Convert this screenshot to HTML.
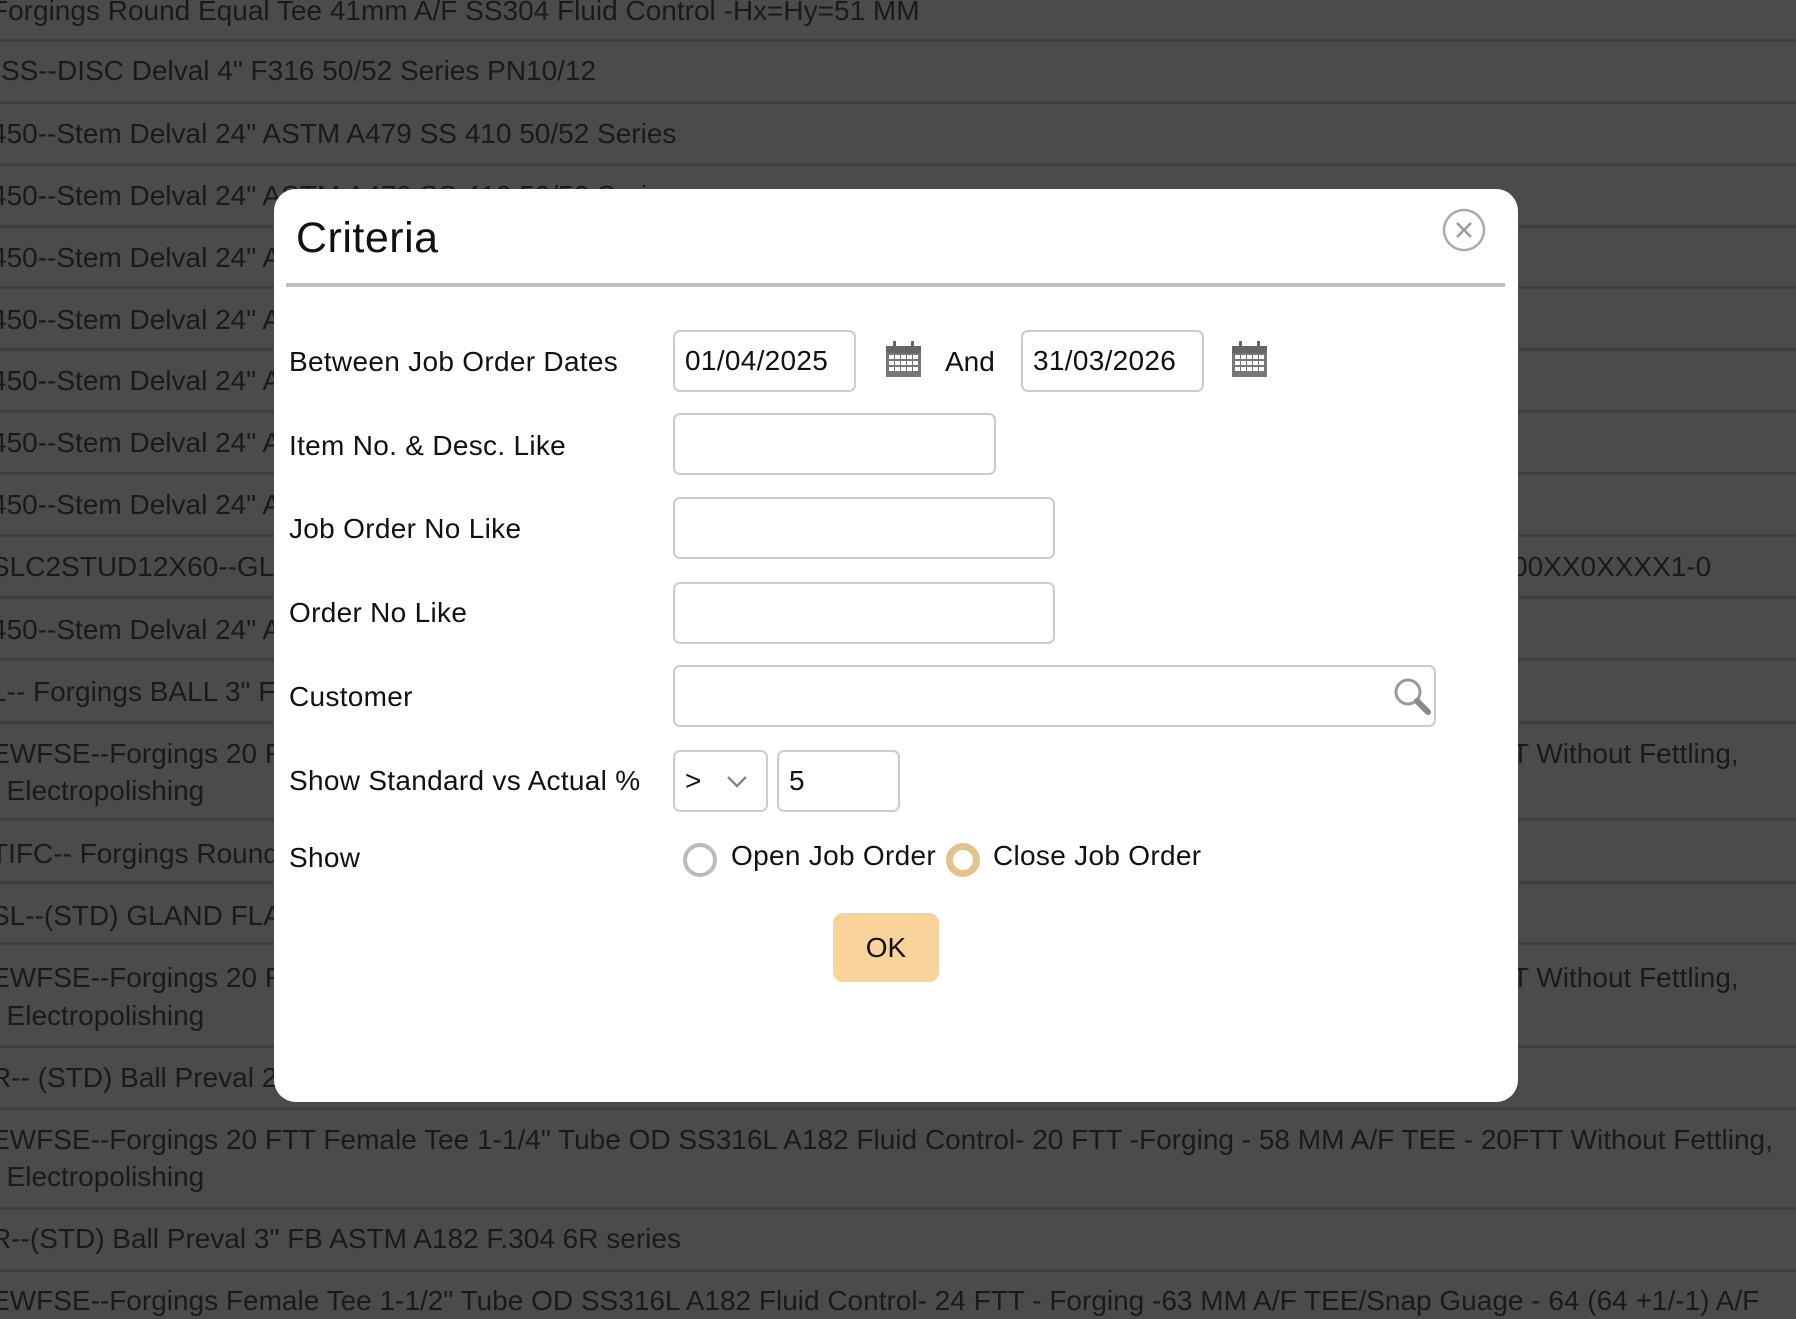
<!DOCTYPE html>
<html><head><meta charset="utf-8"><style>
*{margin:0;padding:0;box-sizing:border-box}
body{width:1796px;height:1316px;overflow:hidden;background:#4b4b4b;font-family:"Liberation Sans",sans-serif;position:relative}
.t{position:absolute;left:-9px;font-size:28px;line-height:36px;color:#1a1a1a;white-space:nowrap;letter-spacing:0}
.s{position:absolute;left:0;width:1796px;height:3px;background:#3f3f3f}
.m{position:absolute;left:274px;top:189px;width:1244px;height:913px;background:#fff;border-radius:22px}
.a{position:absolute}
.l{position:absolute;left:15px;font-size:28px;line-height:36px;color:#111;letter-spacing:0.3px;white-space:nowrap}
.in{position:absolute;border:2px solid #ccc;border-radius:7px;background:#fff;font-size:28px;color:#111;line-height:58px;padding-left:10px;letter-spacing:0.3px}
</style></head><body>
<div class="s" style="top:39px"></div><div class="s" style="top:101px"></div><div class="s" style="top:163px"></div><div class="s" style="top:225px"></div><div class="s" style="top:286px"></div><div class="s" style="top:348px"></div><div class="s" style="top:410px"></div><div class="s" style="top:472px"></div><div class="s" style="top:534px"></div><div class="s" style="top:596px"></div><div class="s" style="top:658px"></div><div class="s" style="top:721px"></div><div class="s" style="top:818px"></div><div class="s" style="top:881px"></div><div class="s" style="top:942px"></div><div class="s" style="top:1045px"></div><div class="s" style="top:1107px"></div><div class="s" style="top:1207px"></div><div class="s" style="top:1269px"></div>
<div class="t" style="top:-7px">Forgings Round Equal Tee 41mm A/F SS304 Fluid Control -Hx=Hy=51 MM</div>
<div class="t" style="top:53px;left:1px">SS--DISC Delval 4" F316 50/52 Series PN10/12</div>
<div class="t" style="top:116px">450--Stem Delval 24" ASTM A479 SS 410 50/52 Series</div>
<div class="t" style="top:178px">450--Stem Delval 24" ASTM A479 SS 410 50/52 Series</div>
<div class="t" style="top:240px">450--Stem Delval 24" ASTM A479 SS 410 50/52 Series</div>
<div class="t" style="top:302px">450--Stem Delval 24" ASTM A479 SS 410 50/52 Series</div>
<div class="t" style="top:363px">450--Stem Delval 24" ASTM A479 SS 410 50/52 Series</div>
<div class="t" style="top:425px">450--Stem Delval 24" ASTM A479 SS 410 50/52 Series</div>
<div class="t" style="top:487px">450--Stem Delval 24" ASTM A479 SS 410 50/52 Series</div>
<div class="t" style="top:549px">SLC2STUD12X60--GLAND</div>
<div class="t" style="top:549px;left:1512px">00XX0XXXX1-0</div>
<div class="t" style="top:612px">450--Stem Delval 24" ASTM A479 SS 410 50/52 Series</div>
<div class="t" style="top:674px">L-- Forgings BALL 3" F304</div>
<div class="t" style="top:736px">EWFSE--Forgings 20 FTT</div>
<div class="t" style="top:736px;left:1512px">T Without Fettling,</div>
<div class="t" style="top:773px">. Electropolishing</div>
<div class="t" style="top:836px">TIFC-- Forgings Round</div>
<div class="t" style="top:898px">SL--(STD) GLAND FLANGE</div>
<div class="t" style="top:960px">EWFSE--Forgings 20 FTT</div>
<div class="t" style="top:960px;left:1512px">T Without Fettling,</div>
<div class="t" style="top:998px">. Electropolishing</div>
<div class="t" style="top:1060px">R-- (STD) Ball Preval 2"</div>
<div class="t" style="top:1122px">EWFSE--Forgings 20 FTT Female Tee 1-1/4" Tube OD SS316L A182 Fluid Control- 20 FTT -Forging - 58 MM A/F TEE - 20FTT Without Fettling,</div>
<div class="t" style="top:1159px">. Electropolishing</div>
<div class="t" style="top:1221px">R--(STD) Ball Preval 3" FB ASTM A182 F.304 6R series</div>
<div class="t" style="top:1283px">EWFSE--Forgings Female Tee 1-1/2" Tube OD SS316L A182 Fluid Control- 24 FTT - Forging -63 MM A/F TEE/Snap Guage - 64 (64 +1/-1) A/F</div>

<div class="m">
 <div class="a" style="left:22px;top:24px;font-size:43px;line-height:50px;color:#111;letter-spacing:0.5px">Criteria</div>
 <svg class="a" style="left:1167px;top:18px" width="46" height="46" viewBox="0 0 46 46"><circle cx="23" cy="23" r="20" fill="none" stroke="#aaa" stroke-width="2.5"/><path d="M16 16L30 30M30 16L16 30" stroke="#999" stroke-width="2.5"/></svg>
 <div class="a" style="left:12px;top:94px;width:1219px;height:4px;background:#bdbdbd"></div>

 <div class="l" style="top:155px">Between Job Order Dates</div>
 <div class="in" style="left:399px;top:141px;width:183px;height:62px">01/04/2025</div>
 <svg class="a" style="left:611px;top:151px" width="37" height="38" viewBox="0 0 37 38"><rect x="1" y="6" width="35" height="31" fill="#777"/><rect x="1" y="6" width="35" height="7" fill="#666"/><rect x="8" y="1" width="3" height="8" fill="#666"/><rect x="26" y="1" width="3" height="8" fill="#666"/><g fill="#fff"><rect x="4" y="15" width="5" height="4"/><rect x="10" y="15" width="5" height="4"/><rect x="16" y="15" width="5" height="4"/><rect x="22" y="15" width="5" height="4"/><rect x="28" y="15" width="5" height="4"/><rect x="4" y="21" width="5" height="4"/><rect x="10" y="21" width="5" height="4"/><rect x="16" y="21" width="5" height="4"/><rect x="22" y="21" width="5" height="4"/><rect x="28" y="21" width="5" height="4"/><rect x="4" y="27" width="5" height="4"/><rect x="10" y="27" width="5" height="4"/><rect x="16" y="27" width="5" height="4"/><rect x="22" y="27" width="5" height="4"/><rect x="28" y="27" width="5" height="4"/></g></svg>
 <div class="a" style="left:671px;top:155px;font-size:28px;line-height:36px;color:#111">And</div>
 <div class="in" style="left:747px;top:141px;width:183px;height:62px">31/03/2026</div>
 <svg class="a" style="left:957px;top:151px" width="37" height="38" viewBox="0 0 37 38"><rect x="1" y="6" width="35" height="31" fill="#777"/><rect x="1" y="6" width="35" height="7" fill="#666"/><rect x="8" y="1" width="3" height="8" fill="#666"/><rect x="26" y="1" width="3" height="8" fill="#666"/><g fill="#fff"><rect x="4" y="15" width="5" height="4"/><rect x="10" y="15" width="5" height="4"/><rect x="16" y="15" width="5" height="4"/><rect x="22" y="15" width="5" height="4"/><rect x="28" y="15" width="5" height="4"/><rect x="4" y="21" width="5" height="4"/><rect x="10" y="21" width="5" height="4"/><rect x="16" y="21" width="5" height="4"/><rect x="22" y="21" width="5" height="4"/><rect x="28" y="21" width="5" height="4"/><rect x="4" y="27" width="5" height="4"/><rect x="10" y="27" width="5" height="4"/><rect x="16" y="27" width="5" height="4"/><rect x="22" y="27" width="5" height="4"/><rect x="28" y="27" width="5" height="4"/></g></svg>

 <div class="l" style="top:239px">Item No. &amp; Desc. Like</div>
 <div class="in" style="left:399px;top:224px;width:323px;height:62px"></div>
 <div class="l" style="top:322px">Job Order No Like</div>
 <div class="in" style="left:399px;top:308px;width:382px;height:62px"></div>
 <div class="l" style="top:406px">Order No Like</div>
 <div class="in" style="left:399px;top:393px;width:382px;height:62px"></div>
 <div class="l" style="top:490px">Customer</div>
 <div class="in" style="left:399px;top:476px;width:763px;height:62px"></div>
 <svg class="a" style="left:1118px;top:487px" width="42" height="42" viewBox="0 0 42 42"><circle cx="16" cy="16" r="12" fill="none" stroke="#999" stroke-width="3"/><path d="M25 25L36 36" stroke="#888" stroke-width="6" stroke-linecap="round"/></svg>

 <div class="l" style="top:574px">Show Standard vs Actual %</div>
 <div class="in" style="left:399px;top:561px;width:95px;height:62px">&gt;</div>
 <svg class="a" style="left:451px;top:585px" width="24" height="16" viewBox="0 0 24 16"><path d="M3 3L12 12L21 3" fill="none" stroke="#888" stroke-width="2.5"/></svg>
 <div class="in" style="left:503px;top:561px;width:123px;height:62px">5</div>

 <div class="l" style="top:651px">Show</div>
 <div class="a" style="left:409px;top:654px;width:34px;height:34px;border:4px solid #bbb;border-radius:50%"></div>
 <div class="a" style="left:457px;top:649px;font-size:28px;line-height:36px;color:#111;letter-spacing:0.3px">Open Job Order</div>
 <div class="a" style="left:672px;top:654px;width:34px;height:34px;border:7px solid #e2c38c;border-radius:50%"></div>
 <div class="a" style="left:719px;top:649px;font-size:28px;line-height:36px;color:#111;letter-spacing:0.3px">Close Job Order</div>

 <div class="a" style="left:559px;top:724px;width:106px;height:69px;background:#f8d49b;border-radius:10px;font-size:28px;line-height:69px;text-align:center;color:#111">OK</div>
</div>
</body></html>
